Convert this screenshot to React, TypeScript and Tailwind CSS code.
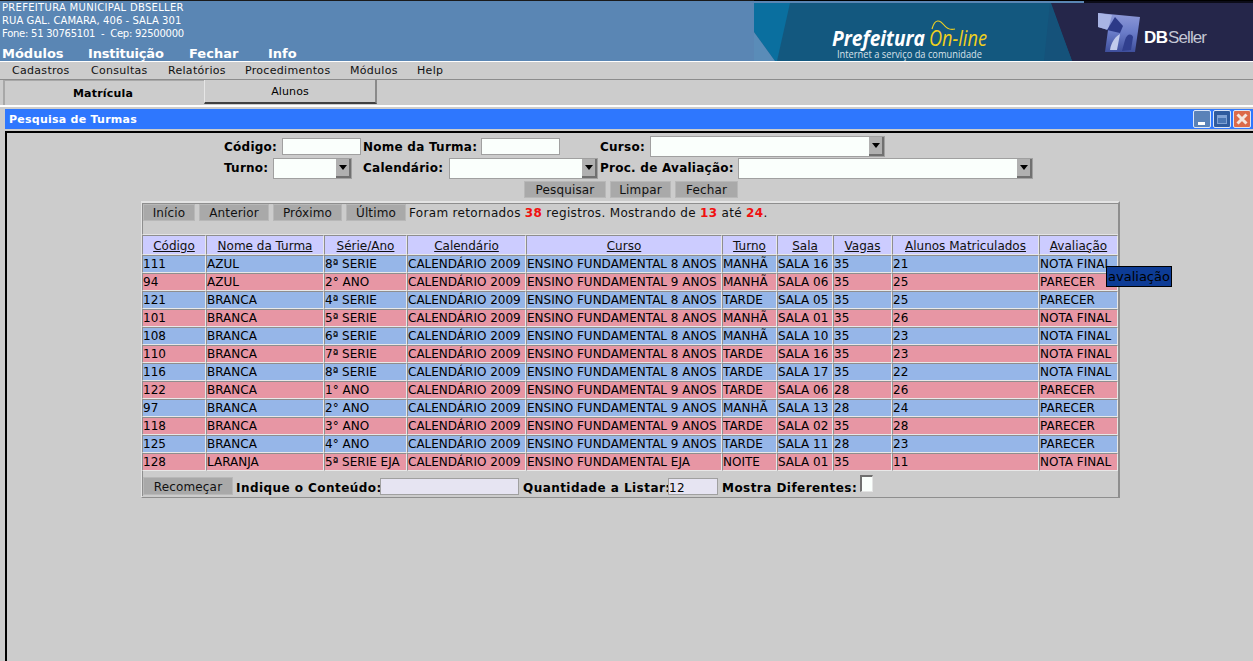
import React from "react";

const cols = [
  ["Código", 64], ["Nome da Turma", 118], ["Série/Ano", 83], ["Calendário", 119], ["Curso", 196],
  ["Turno", 55], ["Sala", 56], ["Vagas", 59], ["Alunos Matriculados", 147], ["Avaliação", 79],
] as const;

const F8 = "ENSINO FUNDAMENTAL 8 ANOS";
const F9 = "ENSINO FUNDAMENTAL 9 ANOS";
const C = "CALENDÁRIO 2009";
const rows = [
  ["111", "AZUL", "8ª SERIE", C, F8, "MANHÃ", "SALA 16", "35", "21", "NOTA FINAL"],
  ["94", "AZUL", "2° ANO", C, F9, "MANHÃ", "SALA 06", "35", "25", "PARECER"],
  ["121", "BRANCA", "4ª SERIE", C, F8, "TARDE", "SALA 05", "35", "25", "PARECER"],
  ["101", "BRANCA", "5ª SERIE", C, F8, "MANHÃ", "SALA 01", "35", "26", "NOTA FINAL"],
  ["108", "BRANCA", "6ª SERIE", C, F8, "MANHÃ", "SALA 10", "35", "23", "NOTA FINAL"],
  ["110", "BRANCA", "7ª SERIE", C, F8, "TARDE", "SALA 16", "35", "23", "NOTA FINAL"],
  ["116", "BRANCA", "8ª SERIE", C, F8, "TARDE", "SALA 17", "35", "22", "NOTA FINAL"],
  ["122", "BRANCA", "1° ANO", C, F9, "TARDE", "SALA 06", "28", "26", "PARECER"],
  ["97", "BRANCA", "2° ANO", C, F9, "MANHÃ", "SALA 13", "28", "24", "PARECER"],
  ["118", "BRANCA", "3° ANO", C, F9, "TARDE", "SALA 02", "35", "28", "PARECER"],
  ["125", "BRANCA", "4° ANO", C, F9, "TARDE", "SALA 11", "28", "23", "PARECER"],
  ["128", "LARANJA", "5ª SERIE EJA", C, "ENSINO FUNDAMENTAL EJA", "NOITE", "SALA 01", "35", "11", "NOTA FINAL"],
];

function Banner() {
  return (
    <svg width="499" height="61" viewBox="754 0 499 61" className="block shrink-0">
      <defs>
        <linearGradient id="lg" x1="0" y1="0" x2="0" y2="1">
          <stop offset="0" stopColor="#8f9ad8" />
          <stop offset="0.5" stopColor="#6a7cc8" />
          <stop offset="1" stopColor="#3f4f9c" />
        </linearGradient>
      </defs>
      <rect x="754" y="0" width="499" height="61" fill="#25264a" />
      <rect x="754" y="0" width="499" height="1" fill="#000" />
      <rect x="754" y="1" width="330" height="2" fill="#5a86b4" />
      <rect x="1084" y="1" width="169" height="2" fill="#0c0c18" />
      <polygon points="754,3 1051,3 1072,61 754,61" fill="#13587f" />
      <polygon points="754,3 790,3 777,61 775,61 754,32" fill="#0a6f9f" />
      <polygon points="754,32 775,61 754,61" fill="#5a8cb8" />
      <polygon points="1044,61 1050,3 1072,61" fill="#15527a" />
      <text x="832" y="46" fill="#fff" fontFamily="'Open Sans', sans-serif" fontWeight="700" fontStyle="italic" fontSize="21" textLength="93" lengthAdjust="spacingAndGlyphs">Prefeitura</text>
      <text x="929" y="46" fill="#f0d020" fontFamily="'Open Sans', sans-serif" fontStyle="italic" fontSize="22" textLength="58" lengthAdjust="spacingAndGlyphs">On-line</text>
      <path d="M932 29 C935 18 940 20 944 25 C947 29 951 30 955 29" fill="none" stroke="#f0d020" strokeWidth="1.2" />
      <text x="837" y="58" fill="#d8e2ea" fontFamily="'Open Sans', sans-serif" fontSize="10" textLength="145" lengthAdjust="spacingAndGlyphs">Internet a serviço da comunidade</text>
      <path d="M1098 13 L1140 17 L1135 52 L1105 52 L1108 30 L1098 27 Z" fill="url(#lg)" />
      <path d="M1098 13 L1112 15 L1108 30 L1098 27 Z" fill="#a8b4e4" />
      <path d="M1115 17 L1123 26 L1120 33 L1107 30 Z" fill="#2c3a88" />
      <path d="M1125 40 C1127 34 1131 33 1133 37 L1131 50 L1122 51 Z" fill="#303f8e" />
      <path d="M1110 50 C1111 42 1116 36 1120 34 L1117 50 Z" fill="#c2cbec" />
      <text x="1144" y="43" fill="#fff" fontFamily="'Liberation Sans', sans-serif" fontWeight="700" fontSize="17" textLength="24">DB</text>
      <text x="1168" y="43" fill="#c4c6d4" fontFamily="'Liberation Sans', sans-serif" fontSize="17" textLength="39">Seller</text>
    </svg>
  );
}

function WinButton({ kind }: { kind: "min" | "max" | "close" }) {
  const cls =
    kind === "min"
      ? "bg-[#5a82b8]"
      : kind === "max"
      ? "bg-[#2f5b9e]"
      : "bg-[#dc6a4a]";
  return (
    <div className={`w-[18px] h-[18px] rounded-[2px] border border-[#dbe6f8] flex items-center justify-center ${cls}`}>
      {kind === "min" && <div className="w-[7px] h-[3px] bg-white mt-[9px] -ml-[1px]" />}
      {kind === "max" && <div className="w-[10px] h-[9px] bg-[#4a76b4] border border-[#7fa2d6] border-t-[3px]" />}
      {kind === "close" && (
        <svg width="12" height="12" viewBox="0 0 12 12">
          <path d="M1.5 1.5 L10.5 10.5 M10.5 1.5 L1.5 10.5" stroke="#f4e6df" strokeWidth="3" />
        </svg>
      )}
    </div>
  );
}

function Txt({ w, bg = "bg-[#fafffc]", mb = "" }: { w: string; bg?: string; mb?: string }) {
  return <input readOnly className={`${w} h-[17px] ${bg} ${mb} border border-[#a0a0a0] outline-none shrink-0`} />;
}

function Sel({ w }: { w: string }) {
  return (
    <div className={`${w} h-[21px] shrink-0 bg-[#fafffc] border border-[#a0a0a0] flex justify-end items-center`}>
      <div className="w-[15px] h-[19px] bg-[#b0b0b0] border-r-2 border-b-2 border-[#707070] flex items-center justify-center">
        <div className="w-0 h-0 border-l-[4px] border-r-[4px] border-t-[5px] border-l-transparent border-r-transparent border-t-black" />
      </div>
    </div>
  );
}

function Btn({ children, w }: { children: React.ReactNode; w: string }) {
  return (
    <button className={`${w} h-[17px] pt-[2px] bg-[#a9a9a9] border border-[#b8b8b8] text-[12px] leading-[13px] font-normal text-[#111] tracking-[0.15px]`}>
      {children}
    </button>
  );
}

export default function App() {
  return (
    <div className="w-[1253px] h-[661px] overflow-hidden bg-[#cccccc] font-['DejaVu_Sans',sans-serif] text-black">
      {/* header */}
      <div className="h-[61px] flex justify-between bg-[#5a86b4] border-t border-[#1a1a1a]">
        <div className="pl-[2px] text-white">
          <div className="text-[10px] leading-[13px] tracking-[0.3px]">PREFEITURA MUNICIPAL DBSELLER</div>
          <div className="text-[10px] leading-[13px] tracking-[0.07px]">RUA GAL. CAMARA, 406 - SALA 301</div>
          <div className="text-[10px] leading-[13px] tracking-[-0.25px] whitespace-pre">Fone: 51 30765101  -  Cep: 92500000</div>
          <div className="flex text-[13px] font-bold leading-[15px] mt-[6px]">
            <span className="w-[86px]">Módulos</span>
            <span className="w-[101px] tracking-[-0.2px]">Instituição</span>
            <span className="w-[79px]">Fechar</span>
            <span>Info</span>
          </div>
        </div>
        <div className="-mt-[1px]"><Banner /></div>
      </div>
      {/* menu */}
      <div className="h-[19px] border-t border-white border-b border-b-[#8c8c8c] flex pl-[12px] text-[11px] leading-[18px] text-[#111] tracking-[0.3px]">
        <span className="w-[79px]">Cadastros</span>
        <span className="w-[77px]">Consultas</span>
        <span className="w-[77px]">Relatórios</span>
        <span className="w-[105px]">Procedimentos</span>
        <span className="w-[67px]">Módulos</span>
        <span>Help</span>
      </div>
      {/* tabs */}
      <div className="h-[25px] flex items-start pl-[3px]">
        <div className="w-[201px] h-[25px] pr-[3px] border-l-2 border-t border-[#a8a8a8] text-[11px] font-bold text-center leading-[25px] tracking-[0.2px]">Matrícula</div>
        <div className="w-[173px] h-[24px] border-l border-r-2 border-b-2 border-l-[#e6e6e6] border-r-[#8a8a8a] border-b-[#404040] text-[11px] text-center leading-[23px] tracking-[0.1px]">Alunos</div>
      </div>
      {/* window */}
      <div className="border-t-2 border-white">
        <div className="ml-[5px] mt-[2px] h-[20px] bg-[#2e77fe] flex items-center justify-between pr-[2px]">
          <span className="pl-[4px] pt-[2px] text-white font-bold text-[11px] tracking-[0.25px]">Pesquisa de Turmas</span>
          <div className="flex gap-[2px]">
            <WinButton kind="min" />
            <WinButton kind="max" />
            <WinButton kind="close" />
          </div>
        </div>
      </div>
      <div className="mt-[2px] ml-[5px] h-[530px] border-l-2 border-t-2 border-black">
        {/* form */}
        <div className="pl-[217px] pt-[3px] text-[12px] font-bold tracking-[0.25px] leading-[17px] whitespace-nowrap">
          <div className="flex items-center h-[20px]">
            <span className="w-[58px] pt-[2px]">Código:</span>
            <Txt w="w-[79px]" />
            <span className="ml-[2px] w-[118px] pt-[2px]">Nome da Turma:</span>
            <Txt w="w-[79px]" />
            <span className="ml-[40px] w-[50px] pt-[2px]">Curso:</span>
            <Sel w="w-[235px]" />
          </div>
          <div className="flex items-center h-[21px] mt-[2px]">
            <span className="w-[49px]">Turno:</span>
            <Sel w="w-[79px]" />
            <span className="ml-[11px] w-[86px]">Calendário:</span>
            <Sel w="w-[149px]" />
            <span className="ml-[2px] w-[138px]">Proc. de Avaliação:</span>
            <Sel w="w-[295px]" />
          </div>
        </div>
        <div className="flex gap-[4px] pl-[517px] mt-[2px]">
          <Btn w="w-[82px]">Pesquisar</Btn>
          <Btn w="w-[61px]">Limpar</Btn>
          <Btn w="w-[63px]">Fechar</Btn>
        </div>
        {/* panel */}
        <div className="ml-[134px] mt-[3px] w-[979px] h-[297px] border-t-2 border-l border-b border-r-2 border-l-[#e4e4e4] border-t-[#e4e4e4] border-r-[#8e8e8e] border-b-[#8e8e8e] relative">
          <div className="h-[32px] flex items-start border-t border-t-[#8e8e8e] border-b border-b-[#e4e4e4] border-l border-l-[#8e8e8e]">
            <div className="flex items-center text-[12px]">
              <Btn w="w-[52px]">Início</Btn>
              <span className="w-[4px]" />
              <Btn w="w-[70px]">Anterior</Btn>
              <span className="w-[4px]" />
              <Btn w="w-[69px]">Próximo</Btn>
              <span className="w-[4px]" />
              <Btn w="w-[60px]">Último</Btn>
              <span className="ml-[3px] pt-[2px] tracking-[0.32px] leading-[15px] whitespace-pre text-[#111]">
                Foram retornados <b className="text-[#f01010]">38</b> registros. Mostrando de <b className="text-[#f01010]">13</b> até <b className="text-[#f01010]">24</b>.
              </span>
            </div>
          </div>
          <table className="table-fixed border-separate border-spacing-0 text-[12px] w-[976px]">
            <colgroup>
              {cols.map(([n, w]) => <col key={n} style={{ width: w }} />)}
            </colgroup>
            <thead>
              <tr>
                {cols.map(([n]) => (
                  <th key={n} className="h-[20px] p-0 pt-[1px] font-normal text-center underline bg-[#ccccff] border border-l-[#8e8e8e] border-t-[#8e8e8e] border-r-[#e8e8e8] border-b-[#e8e8e8] text-[#111] leading-[16px]">{n}</th>
                ))}
              </tr>
            </thead>
            <tbody>
              {rows.map((r, i) => (
                <tr key={r[0]}>
                  {r.map((c, j) => (
                    <td key={j} className={`h-[18px] p-0 leading-[15px] whitespace-nowrap overflow-hidden border border-l-[#8e8e8e] border-t-[#8e8e8e] border-r-[#e8e8e8] border-b-[#e8e8e8] text-black ${i % 2 ? "bg-[#e796a4]" : "bg-[#96b6e8]"}`}>{c}</td>
                  ))}
                </tr>
              ))}
            </tbody>
          </table>
          <div className="flex items-end h-[25px] border-l border-l-[#8e8e8e] text-[12px] font-bold tracking-[0.45px] leading-[15px] whitespace-nowrap">
            <button className="w-[90px] h-[18px] mb-[1px] pt-[2px] shrink-0 bg-[#a9a9a9] border border-[#b8b8b8] text-[12px] leading-[14px] font-normal text-[#111] tracking-[0.15px]">Recomeçar</button>
            <span className="ml-[3px] w-[144px]">Indique o Conteúdo:</span>
            <Txt w="w-[139px]" bg="bg-[#e6e4f2]" mb="mb-[1px]" />
            <span className="ml-[4px] w-[145px]">Quantidade a Listar:</span>
            <input readOnly value="12" className="w-[50px] h-[17px] mb-[1px] pt-[2px] shrink-0 bg-[#e6e4f2] border border-[#a0a0a0] font-normal text-[12px] outline-none" />
            <span className="ml-[4px] w-[138px]">Mostra Diferentes:</span>
            <div className="w-[13px] h-[17px] mb-[4px] shrink-0 bg-[#fafffc] border-l-2 border-t-2 border-l-[#707070] border-t-[#707070] border-r border-b border-r-[#e4e4e4] border-b-[#e4e4e4]" />
          </div>
          <div className="absolute left-[964px] top-[63px] w-[66px] h-[21px] bg-[#0d3c96] border border-black text-[13px] leading-[19px] text-center text-black">avaliação</div>
        </div>
      </div>
    </div>
  );
}
